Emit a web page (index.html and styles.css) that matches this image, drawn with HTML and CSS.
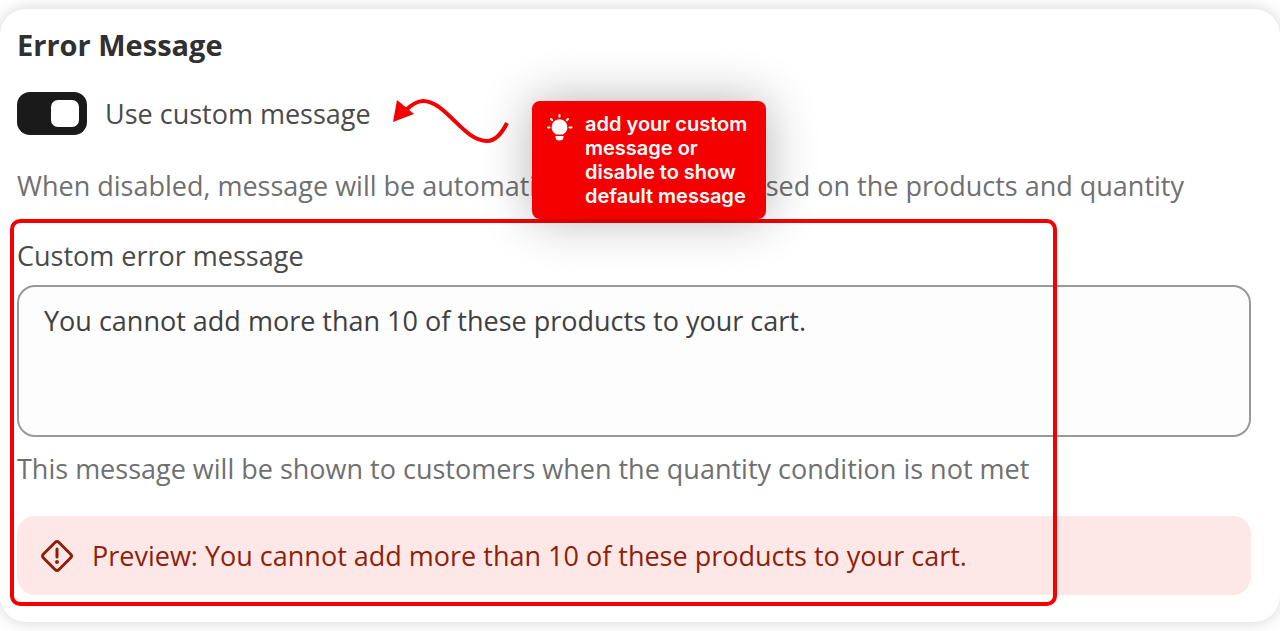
FILE: index.html
```html
<!DOCTYPE html>
<html lang="en">
<head>
    <meta charset="UTF-8">
    <meta name="viewport" content="width=device-width, initial-scale=1.0">
    <title>Error Message</title>
    <link rel="stylesheet" href="styles.css">
</head>
<body>
    <section class="card">
        <h2>Error Message</h2>
        <div class="toggle-row">
            <input type="checkbox" class="switch" id="use-custom" checked>
            <label for="use-custom">Use custom message</label>
            <svg class="arrow" width="120" height="50" viewBox="0 0 120 50">
                <path d="M15 15C22 8 28 5 33 5C56 5 73 45 97 45C106 45 112 37 117 27" fill="none" stroke="#f50000" stroke-width="4"/>
                <path d="M3 26L7 4L24 18Z" fill="#f50000"/>
            </svg>
            <div class="tip">
                <svg class="bulb" width="26" height="28" viewBox="0 0 26 28" fill="#fff">
                    <path d="M9 20.500a8 8 0 1 1 7 0z"/>
                    <path d="M8.500 22h8v1q0 3.500-4 3.500t-4-3.500z"/>
                    <path d="M12.500 1v1.800M4 5l1.200 1.200M21 5l-1.200 1.200M1 13.500h1.500M22.500 13.500H24.500" stroke="#fff" stroke-width="2" stroke-linecap="round"/>
                </svg>
                <p>add your custom message or disable to show default message</p>
            </div>
        </div>
        <p class="help">When disabled, message will be automatically generated based on the products and quantity</p>
        <div class="message-group">
            <label for="message">Custom error message</label>
            <textarea id="message">You cannot add more than 10 of these products to your cart.</textarea>
            <p class="help">This message will be shown to customers when the quantity condition is not met</p>
            <div class="banner">
                <svg width="34" height="34" viewBox="0 0 34 34" fill="none" stroke="#8e1f0b" stroke-width="3">
                    <path d="M15 3.500Q17 1.500 19 3.500L30.500 15Q32.500 17 30.500 19L19 30.500Q17 32.500 15 30.500L3.500 19Q1.500 17 3.500 15Z"/>
                    <path d="M17 10v8" stroke-linecap="round"/>
                    <circle cx="17" cy="23" r="2" fill="#8e1f0b" stroke="none"/>
                </svg>
                <p>Preview: You cannot add more than 10 of these products to your cart.</p>
            </div>
        </div>
    </section>
</body>
</html>
```
FILE: styles.css
```css
* {
    box-sizing: border-box;
}
body {
    margin: 0;
    padding: 9px 0;
    background: #fff;
    font-family: "Segoe UI", "Open Sans", "Noto Sans", sans-serif;
    font-size: 27px;
    line-height: 36px;
    color: #4a4a4a;
}
h2, p {
    margin: 0;
}
.card {
    padding: 18px 29px 27px 17px;
    background: #fff;
    border-radius: 26px;
    box-shadow: 0 0 16px rgba(0, 0, 0, 0.18);
}
h2 {
    font-size: 29px;
    font-weight: 700;
    color: #303030;
}
.toggle-row {
    position: relative;
    z-index: 2;
    display: flex;
    align-items: center;
    gap: 18px;
    margin: 29px 0 33px;
}
.switch {
    appearance: none;
    display: flex;
    justify-content: flex-end;
    width: 70px;
    height: 43px;
    margin: 0;
    padding: 8px;
    border-radius: 13px;
    background: #1a1a1a;
    cursor: pointer;
}
.switch::before {
    content: "";
    width: 28px;
    height: 27px;
    border-radius: 7px;
    background: #fff;
}
.switch:not(:checked) {
    justify-content: flex-start;
    background: #8a8a8a;
}
.help {
    color: #707070;
}
.arrow {
    position: absolute;
    left: 373px;
    top: 4px;
}
.tip {
    position: absolute;
    left: 515px;
    top: 9px;
    display: flex;
    gap: 12px;
    width: 234px;
    padding: 11px 15px;
    border-radius: 8px;
    background: #f50000;
    box-shadow: 0 0 50px rgba(0, 0, 0, 0.3);
    color: #fff;
    font-family: Inter, sans-serif;
    font-size: 20px;
    font-weight: 600;
    line-height: 24px;
}
.bulb {
    flex: none;
    margin-top: 2px;
}
.message-group {
    position: relative;
    margin-top: 34px;
}
/* red outline around the message settings */
.message-group::after {
    content: "";
    position: absolute;
    top: -19px;
    right: 194px;
    bottom: -11px;
    left: -7px;
    border: 4px solid #f50000;
    border-radius: 10px;
    pointer-events: none;
}
.message-group label {
    display: block;
    margin-bottom: 11px;
}
textarea {
    display: block;
    width: 100%;
    height: 152px;
    padding: 16px 25px;
    border: 2px solid #999;
    border-radius: 18px;
    background: #fdfdfd;
    color: #404040;
    font: inherit;
    resize: none;
}
.message-group .help {
    margin: 14px 0 29px;
}
.banner {
    display: flex;
    align-items: center;
    gap: 18px;
    min-height: 79px;
    padding: 20px 23px;
    border-radius: 18px;
    background: #fee8e7;
    color: #8e1f0b;
}
```
